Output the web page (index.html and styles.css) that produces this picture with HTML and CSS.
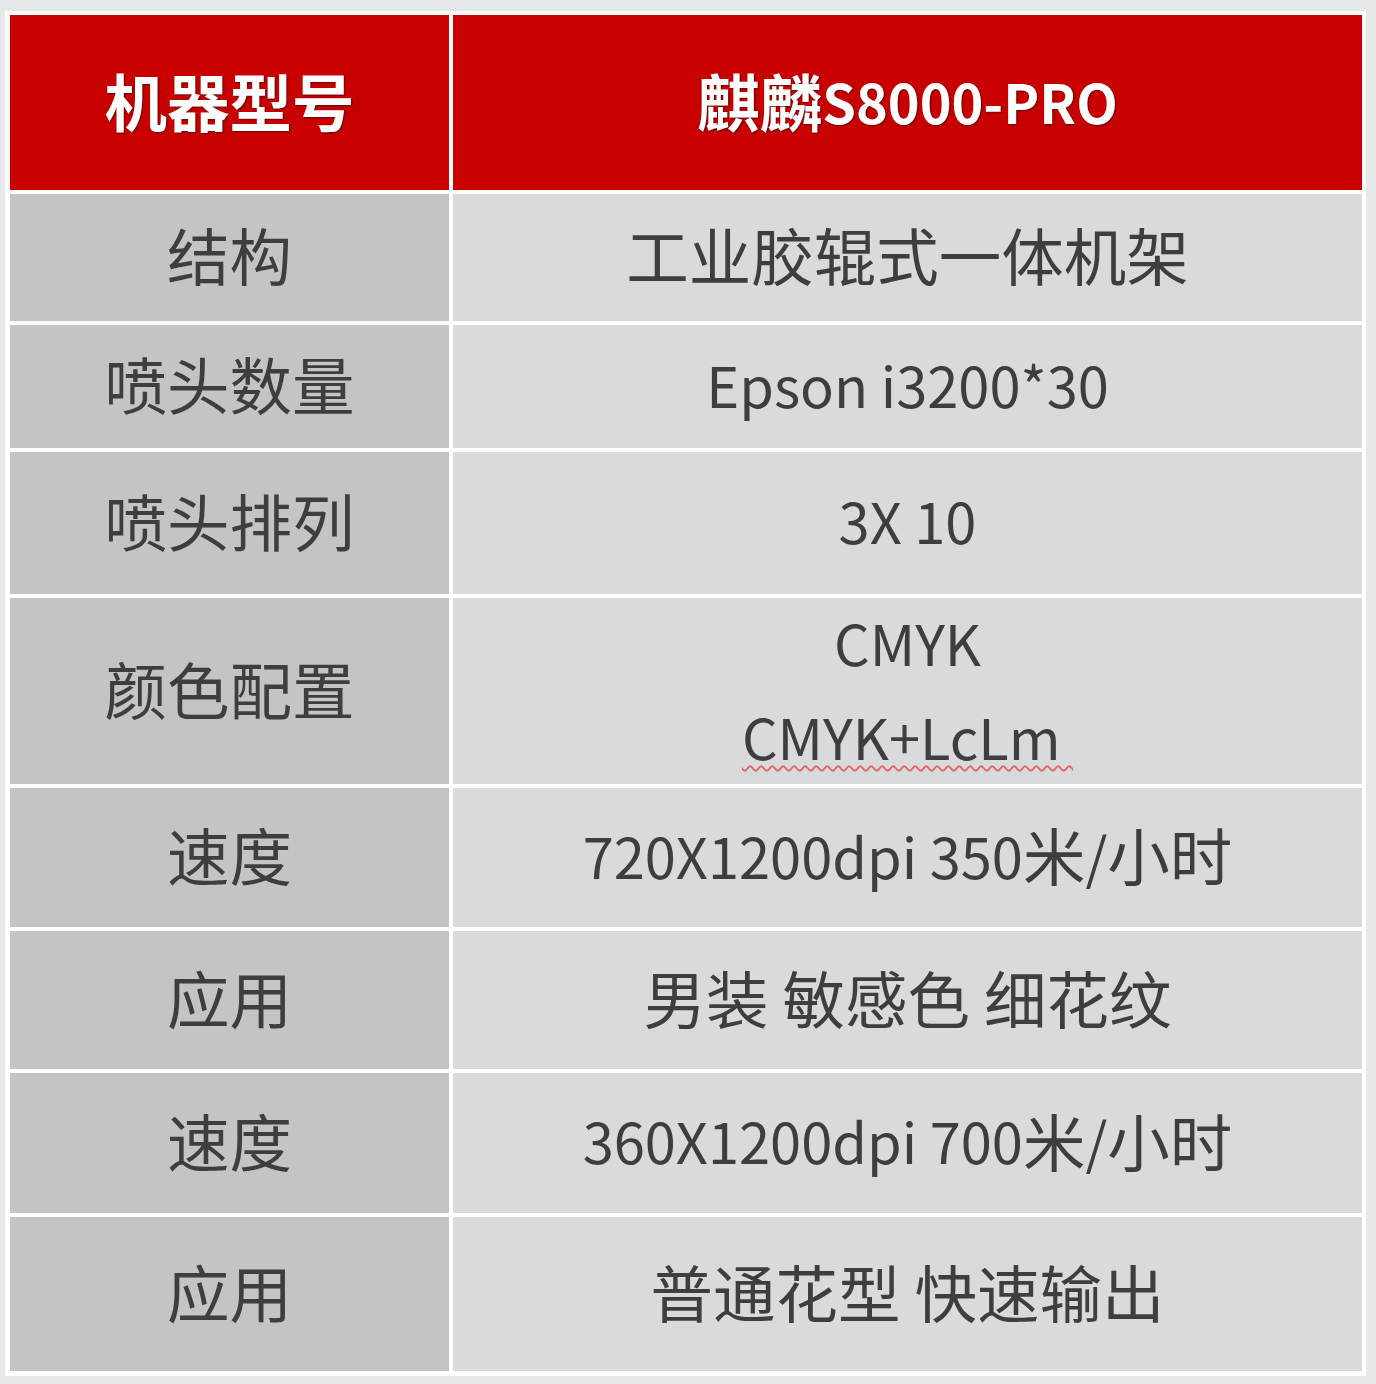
FILE: index.html
```html
<!DOCTYPE html>
<html lang="zh-CN">
<head>
<meta charset="utf-8">
<title>麒麟S8000-PRO</title>
<link rel="stylesheet" href="styles.css">
</head>
<body>
<div class="frame">
  <div class="spec">
    <div class="cell head">机器型号</div>
    <div class="cell head">麒麟<span class="lat-h">S8000-PRO</span></div>

    <div class="cell key">结构</div>
    <div class="cell val">工业胶辊式一体机架</div>

    <div class="cell key">喷头数量</div>
    <div class="cell val"><span class="lat">Epson i3200*30</span></div>

    <div class="cell key">喷头排列</div>
    <div class="cell val"><span class="lat">3X 10</span></div>

    <div class="cell key">颜色配置</div>
    <div class="cell val multi">
      <div class="line"><span class="lat">CMYK</span></div>
      <div class="line"><span class="lat spell">CMYK+LcLm&nbsp;</span></div>
    </div>

    <div class="cell key">速度</div>
    <div class="cell val"><span class="lat">720X1200dpi 350</span>米<span class="lat">/</span>小时</div>

    <div class="cell key">应用</div>
    <div class="cell val">男装 敏感色 细花纹</div>

    <div class="cell key">速度</div>
    <div class="cell val"><span class="lat">360X1200dpi 700</span>米<span class="lat">/</span>小时</div>

    <div class="cell key">应用</div>
    <div class="cell val">普通花型 快速输出</div>
  </div>
</div>
</body>
</html>
```

FILE: styles.css
```css
html, body {
  margin: 0;
  padding: 0;
}

body {
  background: #e7e8ea;
  width: 1376px;
  height: 1384px;
  overflow: hidden;
  font-family: "Noto Sans CJK SC", "Noto Sans", sans-serif;
}

.frame {
  margin: 11px 0 0 5px;
  width: 1352px;
  padding: 4px 4px 5px 5px;
  background: #ffffff;
}

.spec {
  display: grid;
  grid-template-columns: 439px 909px;
  grid-template-rows: 175px 127px 123px 142px 186px 139px 138px 140px 154px;
  column-gap: 4px;
  row-gap: 4px;
}

.cell {
  display: flex;
  align-items: center;
  justify-content: center;
  font-size: 62.5px;
  color: #3e3e40;
  white-space: nowrap;
  line-height: 1;
  padding-bottom: 6px;
  box-sizing: border-box;
}

.cell > .lat {
  line-height: 1;
}

.lat {
  font-size: 56px;
}

.head {
  background: #c90000;
  color: #ffffff;
  font-weight: 700;
  text-shadow: 1px 1px 2px rgba(60, 0, 0, 0.7);
  padding-bottom: 4px;
}

.lat-h {
  font-size: 54px;
}

.key {
  background: #c3c4c6;
}

.val {
  background: #d9dadc;
}

.multi {
  flex-direction: column;
  padding-bottom: 8px;
}

.line {
  line-height: 91px;
}

.spell {
  text-decoration: underline wavy #e26666;
  text-decoration-thickness: 1.5px;
  text-underline-offset: 5px;
}
```
